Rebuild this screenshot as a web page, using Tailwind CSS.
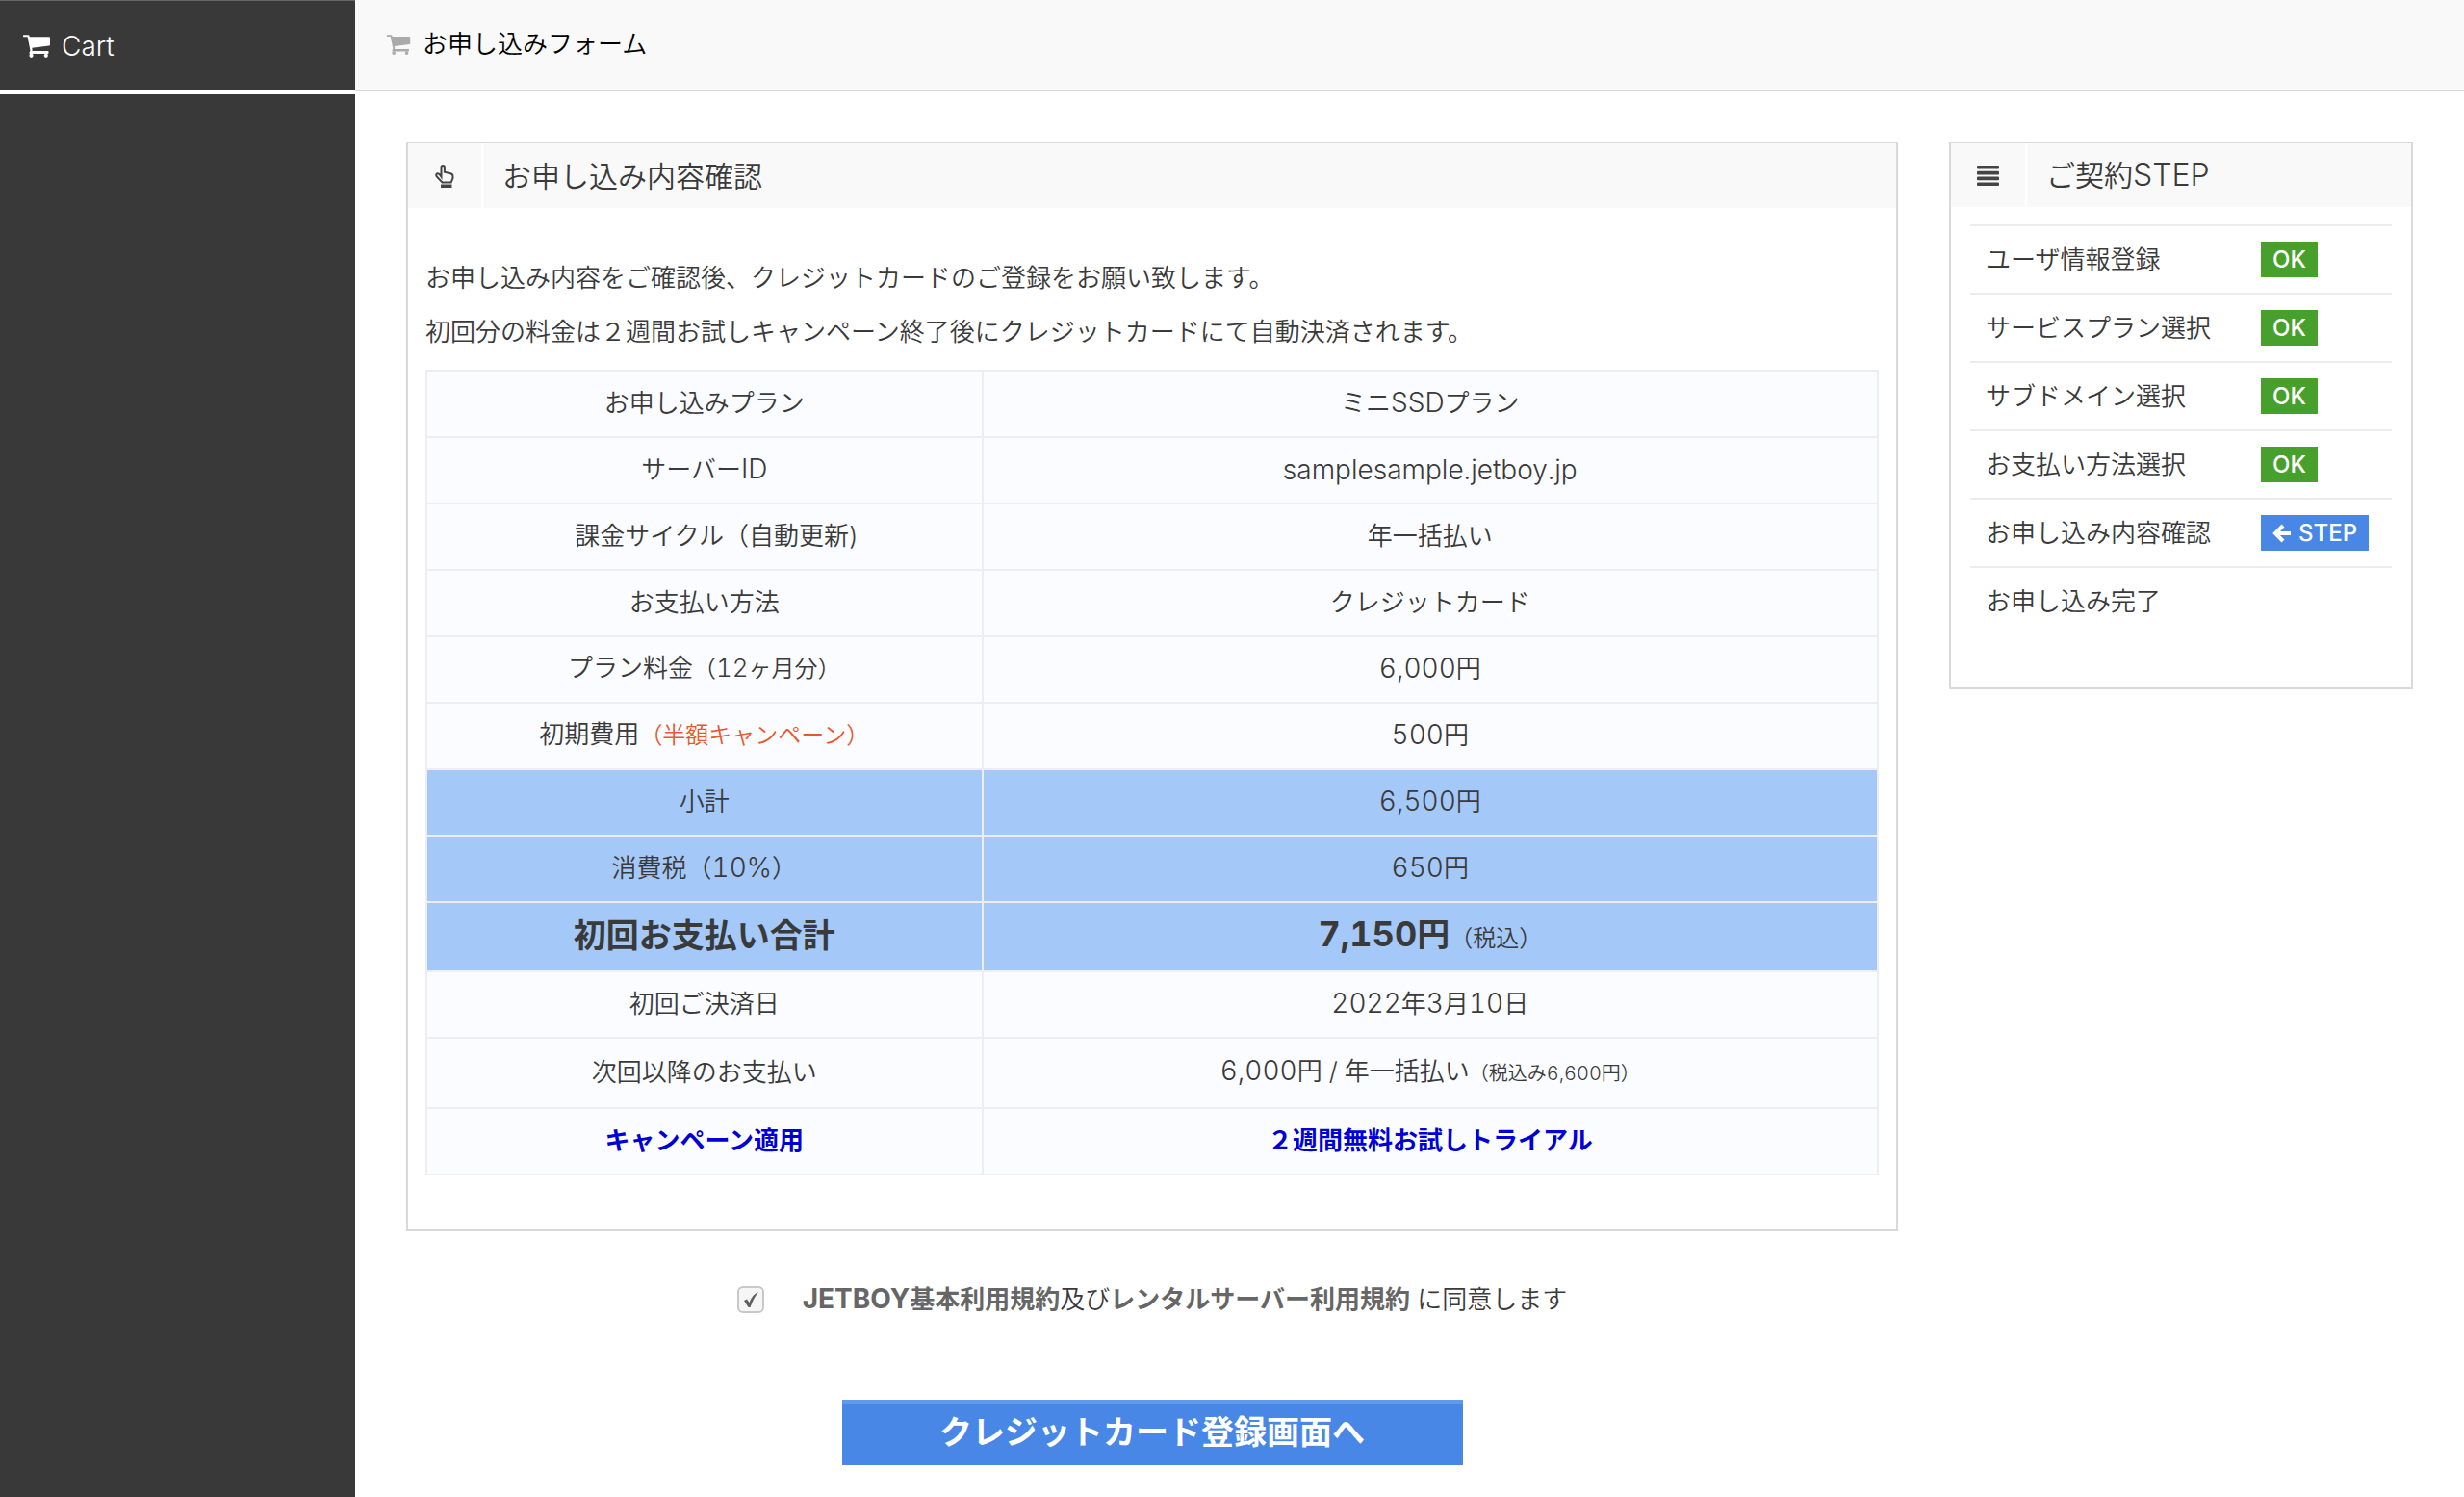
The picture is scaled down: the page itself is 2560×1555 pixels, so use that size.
<!DOCTYPE html>
<html lang="ja">
<head>
<meta charset="utf-8">
<meta name="viewport" content="width=device-width, initial-scale=1">
<title>お申し込みフォーム</title>
<script src="https://cdn.jsdelivr.net/npm/@tailwindcss/browser@4"></script>
</head>
<body class="flex min-h-screen bg-white font-['Inter','Noto_Sans_CJK_JP',sans-serif] text-[26px] leading-[36px] font-[350] text-[#3a3a3a]">
<svg class="hidden" aria-hidden="true">
  <symbol id="cart" viewBox="0 0 28 24">
    <path d="M.5.200h5q.8 0 1 .8l.3 1.300H27q1 0 1 1v7.200q0 .9-1 1L9.200 13.800l.4 1.800q.1.700-.3 1.400H25.800q.7 0 .7.700v1.600q0 .7-.7.700H7.200q-.8 0-.8-.8 0-.5 1.100-2.700L4.600 2.200H.5Q0 2.200 0 1.200T.5.200z"/>
    <circle cx="8.500" cy="21.800" r="2.100"/><circle cx="23.800" cy="21.800" r="2.100"/>
  </symbol>
</svg>
<aside class="flex w-[369px] shrink-0 flex-col border-t border-[#666] bg-[#393939]">
  <a href="#" class="flex h-[97px] items-center gap-3 border-b-4 border-white pl-6 text-[28px] text-white">
    <svg class="h-6 w-7 fill-white"><use href="#cart"/></svg>
    <span>Cart</span>
  </a>
</aside>
<div class="flex min-w-0 grow flex-col">
  <header class="flex h-[95px] items-center gap-3 border-b-2 border-[#d9d9d9] bg-[#f9f9f9] pl-8 text-black">
    <svg class="h-[21px] w-[26px] fill-[#aaa]"><use href="#cart"/></svg>
    <h1 class="pb-[2px]">お申し込みフォーム</h1>
  </header>
  <main class="grid grid-cols-[1550fr_482fr] items-start gap-[53px] px-[53px] pt-[52px]">
    <form>
      <section class="border-2 border-[#d9d9d9]">
        <div class="flex h-[67px] items-center bg-[#f9f9f9]">
          <span class="flex h-full w-[78px] items-center justify-center border-r-2 border-white">
            <svg class="h-6 w-5 fill-none stroke-[#444] stroke-2" viewBox="0 0 20 24"><path d="M6.500 12.500V2.800a1.700 1.700 0 0 1 3.400 0v5l6.200 1.400q2.400.6 2.400 2.800v2l-1.800 4.500H7.500L1.800 12.500q-1.500-2.600.7-3.200 1.700-.4 4 3.200z"/><path d="M6 20.500h11.500V24H6z" class="fill-[#444] stroke-none"/></svg>
          </span>
          <h2 class="pl-5 text-[30px]">お申し込み内容確認</h2>
        </div>
        <div class="px-[18px] pt-[45px] pb-[56px]">
          <p class="leading-[56px]">お申し込み内容をご確認後、クレジットカードのご登録をお願い致します。</p>
          <p class="leading-[56px]">初回分の料金は２週間お試しキャンペーン終了後にクレジットカードにて自動決済されます。</p>
          <table class="mt-[11px] w-full table-fixed border-collapse bg-[#fbfcff] text-center tabular-nums [&_td]:border-2 [&_td]:border-[#ededf2] [&_td]:p-0 [&_td]:pb-[2px] [&_th]:border-2 [&_th]:border-[#ededf2] [&_th]:p-0 [&_th]:pb-[2px]">
            <colgroup><col class="w-[38.3%]"><col></colgroup>
            <tbody>
              <tr class="h-[69px]"><th class="font-[350]">お申し込みプラン</th><td>ミニ<span class="text-[28px]">SSD</span>プラン</td></tr>
              <tr class="h-[69px]"><th class="font-[350]">サーバー<span class="text-[28px]">ID</span></th><td class="text-[28px]">samplesample.jetboy.jp</td></tr>
              <tr class="h-[69px]"><th class="font-[350]">&emsp;課金サイクル（自動更新)</th><td>年一括払い</td></tr>
              <tr class="h-[69px]"><th class="font-[350]">お支払い方法</th><td>クレジットカード</td></tr>
              <tr class="h-[69px]"><th class="font-[350]">プラン料金<span class="text-[24px]">（<span class="text-[26px]">12</span>ヶ月分）</span></th><td><span class="text-[28px]">6,000</span>円</td></tr>
              <tr class="h-[69px]"><th class="font-[350]">初期費用<span class="text-[24px] text-[#e8582c]">（半額キャンペーン）</span></th><td><span class="text-[28px]">500</span>円</td></tr>
              <tr class="h-[69px] bg-[#a4c8f8]"><th class="font-[350]">小計</th><td><span class="text-[28px]">6,500</span>円</td></tr>
              <tr class="h-[69px] bg-[#a4c8f8]"><th class="font-[350]">消費税（<span class="text-[28px]">10%</span>）</th><td><span class="text-[28px]">650</span>円</td></tr>
              <tr class="h-[72px] bg-[#a4c8f8]"><th class="text-[34px] font-bold">初回お支払い合計</th><td><strong class="text-[34px] font-bold"><span class="text-[36px]">7,150</span>円</strong><span class="text-[24px]">（税込）</span></td></tr>
              <tr class="h-[69px]"><th class="font-[350]">初回ご決済日</th><td><span class="text-[28px]">2022</span>年<span class="text-[28px]">3</span>月<span class="text-[28px]">10</span>日</td></tr>
              <tr class="h-[73px]"><th class="font-[350]">次回以降のお支払い</th><td><span class="text-[28px]">6,000</span>円 / 年一括払い<span class="text-[20px]">（税込み6,600円）</span></td></tr>
              <tr class="h-[69px] text-[#0000d6]"><th class="font-bold">キャンペーン適用</th><td class="font-bold">２週間無料お試しトライアル</td></tr>
            </tbody>
          </table>
        </div>
      </section>
      <div class="mt-[52px] flex items-center justify-center gap-10">
        <input id="agree" type="checkbox" checked class="size-7 appearance-none rounded-md border-2 border-[#c8c8c8] bg-[#f6f6f6] bg-[url('data:image/svg+xml,%3Csvg%20xmlns=%22http://www.w3.org/2000/svg%22%20viewBox=%220%200%2024%2024%22%3E%3Cpath%20d=%22M5%2013l3-1.500%202.500%203.500Q14%206%2020%204%2015%2010%2011.500%2020H9.500z%22%20fill=%22%23606060%22/%3E%3C/svg%3E')]">
        <label for="agree"><a href="#" class="font-bold text-[#666]"><span class="text-[28px]">JETBOY</span>基本利用規約</a>及び<a href="#" class="font-bold text-[#666]">レンタルサーバー利用規約</a> に同意します</label>
      </div>
      <button type="submit" class="mx-auto mt-[86px] mb-6 block h-[68px] w-[645px] border-t-4 border-[#5f9af0] bg-[#4887e6] pb-1 text-[34px] font-bold text-white">クレジットカード登録画面へ</button>
    </form>
    <aside class="border-2 border-[#d9d9d9]">
      <div class="flex h-[66px] items-center bg-[#f9f9f9]">
        <span class="flex h-full w-[79px] items-center justify-center border-r-2 border-white">
          <svg class="h-[21px] w-[23px] fill-[#444]" viewBox="0 0 23 21"><rect width="23" height="3.600" rx="1"/><rect y="5.800" width="23" height="3.600" rx="1"/><rect y="11.600" width="23" height="3.600" rx="1"/><rect y="17.400" width="23" height="3.600" rx="1"/></svg>
        </span>
        <h2 class="pl-5 text-[30px]">ご契約<span class="text-[32px]">STEP</span></h2>
      </div>
      <div class="px-5 pt-[18px] pb-[54px]">
        <table class="w-full table-fixed border-collapse text-left [&_tr]:h-[71px] [&_tr]:border-t-2 [&_tr]:border-[#ececec]">
          <colgroup><col class="w-[302px]"><col></colgroup>
          <tbody>
            <tr><td class="pl-4">ユーザ情報登録</td><td><span class="flex h-[37px] w-fit items-center bg-[#47a02c] px-3 text-[24px] font-medium text-white">OK</span></td></tr>
            <tr><td class="pl-4">サービスプラン選択</td><td><span class="flex h-[37px] w-fit items-center bg-[#47a02c] px-3 text-[24px] font-medium text-white">OK</span></td></tr>
            <tr><td class="pl-4">サブドメイン選択</td><td><span class="flex h-[37px] w-fit items-center bg-[#47a02c] px-3 text-[24px] font-medium text-white">OK</span></td></tr>
            <tr><td class="pl-4">お支払い方法選択</td><td><span class="flex h-[37px] w-fit items-center bg-[#47a02c] px-3 text-[24px] font-medium text-white">OK</span></td></tr>
            <tr><td class="pl-4">お申し込み内容確認</td><td><span class="flex h-[37px] w-fit items-center gap-2 bg-[#4887e6] px-3 text-[24px] font-medium text-white"><svg class="h-5 w-[19px] fill-none stroke-white stroke-4" viewBox="0 0 19 20"><path d="M11 2L3 10l8 8M3 10h16"/></svg>STEP</span></td></tr>
            <tr><td class="pl-4">お申し込み完了</td><td></td></tr>
          </tbody>
        </table>
      </div>
    </aside>
  </main>
</div>
</body>
</html>
